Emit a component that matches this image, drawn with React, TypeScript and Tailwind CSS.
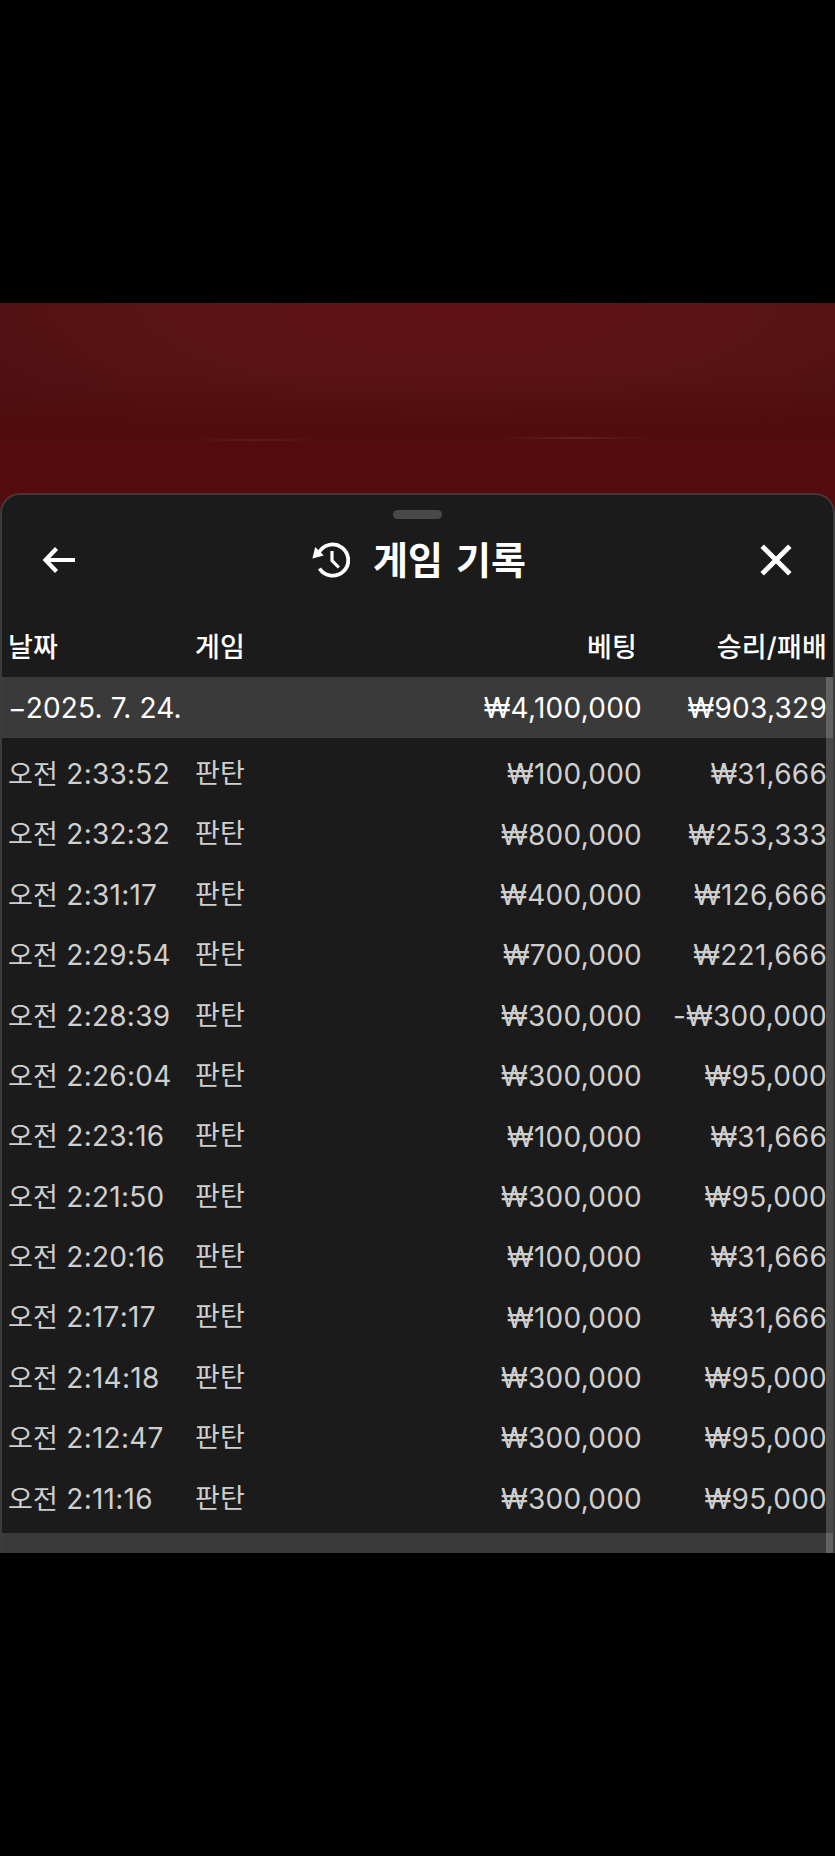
import React from 'react';

interface Round {
  time: string;
  bet: string;
  result: string;
}

const rounds: Round[] = [
  { time: '2:33:52', bet: '₩100,000', result: '₩31,666' },
  { time: '2:32:32', bet: '₩800,000', result: '₩253,333' },
  { time: '2:31:17', bet: '₩400,000', result: '₩126,666' },
  { time: '2:29:54', bet: '₩700,000', result: '₩221,666' },
  { time: '2:28:39', bet: '₩300,000', result: '-₩300,000' },
  { time: '2:26:04', bet: '₩300,000', result: '₩95,000' },
  { time: '2:23:16', bet: '₩100,000', result: '₩31,666' },
  { time: '2:21:50', bet: '₩300,000', result: '₩95,000' },
  { time: '2:20:16', bet: '₩100,000', result: '₩31,666' },
  { time: '2:17:17', bet: '₩100,000', result: '₩31,666' },
  { time: '2:14:18', bet: '₩300,000', result: '₩95,000' },
  { time: '2:12:47', bet: '₩300,000', result: '₩95,000' },
  { time: '2:11:16', bet: '₩300,000', result: '₩95,000' },
];

const columns = 'grid grid-cols-[187px_220px_1fr_185px] items-center pl-[6px] pr-[6px]';

const BackIcon = () => (
  <svg width="34" height="28" viewBox="0 0 34 28" fill="none" stroke="white" strokeWidth="4.2">
    <path d="M33 14H4M14.5 2.5 3.5 14l11 11.5" />
  </svg>
);

const HistoryIcon = () => (
  <svg width="38" height="38" viewBox="0 0 38 38" fill="none" stroke="white">
    <path d="M6.5 12.5A15.6 15.6 0 1 1 7.5 27.5" strokeWidth="3.8" />
    <path d="M3.2 6 0.4 17.4 11.8 14.4Z" fill="white" stroke="none" />
    <path d="M20 10v9.5l6.8 7" strokeWidth="3.2" />
  </svg>
);

const CloseIcon = () => (
  <svg width="32" height="32" viewBox="0 0 32 32" fill="none" stroke="white" strokeWidth="4.9">
    <path d="M2.2 2.2l27.6 27.6M29.8 2.2 2.2 29.8" />
  </svg>
);

const Backdrop = () => (
  <div className="h-[190px] bg-[#540b0d]">
    <div className="h-[134px] bg-[radial-gradient(ellipse_at_55%_0%,#601114_0%,#591314_45%,#4b1011_100%)]">
      <div className="h-full bg-linear-to-b from-transparent from-55% to-[#500b0c]" />
    </div>
    {/* Table edge, with the light catching it in two places */}
    <div className="flex h-[5px] items-start bg-[#500d0f] pl-[190px]">
      <div className="mt-[2px] h-[2px] w-[130px] bg-linear-to-r from-transparent via-[#5a1b1c] to-transparent" />
      <div className="ml-[180px] h-[2px] w-[150px] bg-linear-to-r from-transparent via-[#5f2122] to-transparent" />
    </div>
  </div>
);

export default function App() {
  return (
    <div className="h-[1856px] w-[835px] overflow-hidden bg-black pt-[303px] font-['Inter','Noto_Sans_CJK_KR',sans-serif] text-[28px] tracking-[0.25px] text-white">
      <div className="h-[1250px] overflow-hidden bg-[#540b0d]">
        <Backdrop />
        <main className="relative h-[1060px] rounded-t-[20px] border-x-2 border-t-2 border-x-[#3c3c3c] border-t-[#4a3535] bg-[#1b1b1b]">
          <div className="flex h-[37px] items-start justify-center pt-[15px]">
            <div className="h-[9px] w-[49px] rounded-full bg-[#494949]" />
          </div>

          <header className="flex h-[56px] items-center justify-between pr-[41px] pl-[40px]">
            <button aria-label="뒤로"><BackIcon /></button>
            <div className="ml-[2px] flex items-center gap-[23px]">
              <HistoryIcon />
              <h1 className="text-[38px] leading-[56px] font-bold tracking-normal [word-spacing:4px]">게임 기록</h1>
            </div>
            <button aria-label="닫기"><CloseIcon /></button>
          </header>

          <div className={`${columns} h-[89px] pt-[31px] text-[27px] font-medium tracking-[0.2px]`}>
            <span>날짜</span>
            <span>게임</span>
            <span className="pr-[5px] text-right">베팅</span>
            <span className="text-right">승리/패배</span>
          </div>

          <div className={`${columns} h-[61px] bg-[#3a3a3a]`}>
            <span className="col-span-2 tracking-[0.15px]">−2025. 7. 24.</span>
            <span className="text-right">₩4,100,000</span>
            <span className="text-right">₩903,329</span>
          </div>

          <div className="h-[795px] pt-[6px] text-[#cfcfcf]">
            {rounds.map((round) => (
              <div key={round.time} className={`${columns} h-[60.4px]`}>
                <span className="[font-kerning:none]">
                  <span className="text-[27px]">오전</span> {round.time}
                </span>
                <span className="text-[27px]">판탄</span>
                <span className="text-right">{round.bet}</span>
                <span className="text-right">{round.result}</span>
              </div>
            ))}
          </div>
          <div className="h-[20px] bg-[#3a3a3a]" />

          {/* Scrollbar */}
          <div className="absolute right-0 bottom-0 h-[876px] w-[7px] bg-white/20" />
        </main>
      </div>
    </div>
  );
}
